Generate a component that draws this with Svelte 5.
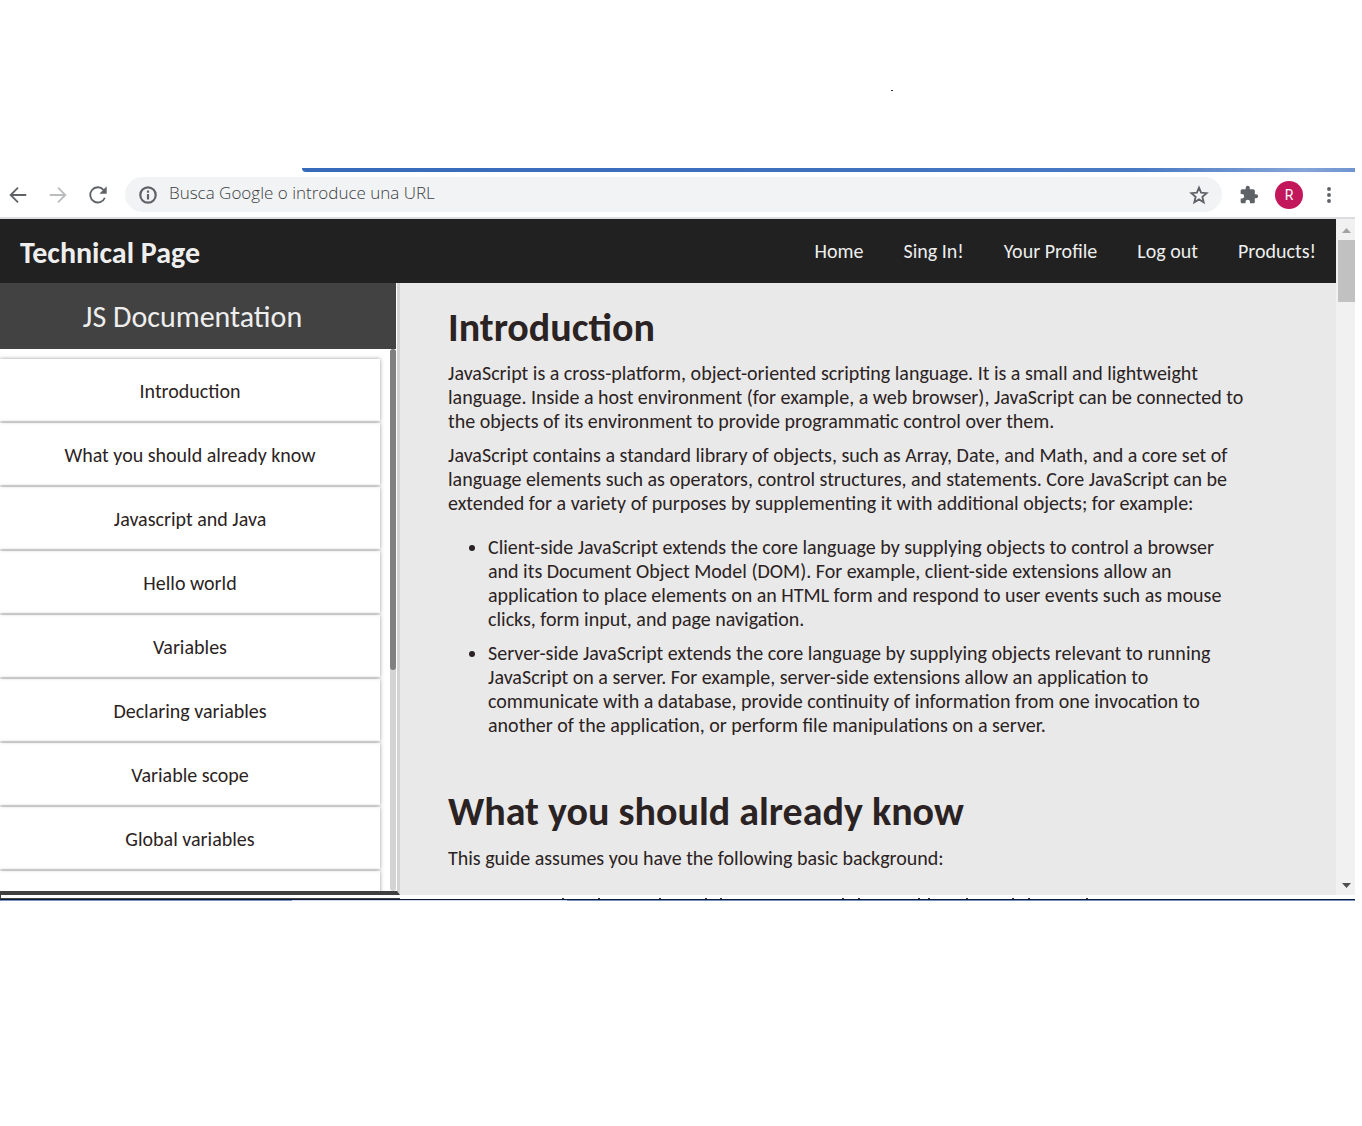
<script>
  const nav = ['Home', 'Sing In!', 'Your Profile', 'Log out', 'Products!'];
  const topics = [
    'Introduction',
    'What you should already know',
    'Javascript and Java',
    'Hello world',
    'Variables',
    'Declaring variables',
    'Variable scope',
    'Global variables'
  ];
  const intro = [
    'JavaScript is a cross-platform, object-oriented scripting language. It is a small and lightweight language. Inside a host environment (for example, a web browser), JavaScript can be connected to the objects of its environment to provide programmatic control over them.',
    'JavaScript contains a standard library of objects, such as Array, Date, and Math, and a core set of language elements such as operators, control structures, and statements. Core JavaScript can be extended for a variety of purposes by supplementing it with additional objects; for example:'
  ];
  const sides = [
    'Client-side JavaScript extends the core language by supplying objects to control a browser and its Document Object Model (DOM). For example, client-side extensions allow an application to place elements on an HTML form and respond to user events such as mouse clicks, form input, and page navigation.',
    'Server-side JavaScript extends the core language by supplying objects relevant to running JavaScript on a server. For example, server-side extensions allow an application to communicate with a database, provide continuity of information from one invocation to another of the application, or perform file manipulations on a server.'
  ];
  const ticks = [562, 598, 659, 705, 720, 842, 858, 918, 928, 966, 1012, 1028, 1086];
</script>

<div class="canvas">
  <div class="top"><span class="dot"></span></div>
  <div class="browser">
    <div class="tabstrip"></div>
    <div class="toolbar">
      <button aria-label="Back"><svg viewBox="0 0 24 24"><path d="M21 12H5M12 4L4 12L12 20" /></svg></button>
      <button class="off" aria-label="Forward"><svg viewBox="0 0 24 24"><path d="M3 12H19M12 4L20 12L12 20" /></svg></button>
      <button aria-label="Reload"><svg viewBox="0 0 24 24"><path d="M19.500 15A8.300 8.300 0 1 1 18 6.300" /><path class="solid" d="M21.500 2.500V10.500H13.500Z" /></svg></button>
      <div class="address">
        <svg class="info" viewBox="0 0 20 20"><circle cx="10" cy="10" r="7" /><path d="M10 9V14M10 6V8" /></svg>
        <input aria-label="URL" placeholder="Busca Google o introduce una URL" />
        <button class="star" aria-label="Bookmark"><svg viewBox="0 0 24 24"><path d="M12 4L14.300 9.500L20.300 10L15.700 14L17.100 19.900L12 16.800L6.900 19.900L8.300 14L3.700 10L9.700 9.500Z" /></svg></button>
      </div>
      <button class="ext" aria-label="Extensions"><svg viewBox="0 0 24 24"><path class="solid" d="M20.500 11H19V7c0-1.100-.9-2-2-2h-4V3.500a2.500 2.500 0 0 0-5 0V5H4c-1.100 0-2 .9-2 2v3.800h1.500a2.700 2.700 0 0 1 0 5.400H2V20c0 1.100.9 2 2 2h3.800v-1.500a2.700 2.700 0 0 1 5.400 0V22H17c1.100 0 2-.9 2-2v-4h1.500a2.500 2.500 0 0 0 0-5z" /></svg></button>
      <button class="avatar" aria-label="Account">R</button>
      <button class="more" aria-label="More"><svg viewBox="0 0 24 24"><circle class="solid" cx="12" cy="4" r="2.600" /><circle class="solid" cx="12" cy="12" r="2.600" /><circle class="solid" cx="12" cy="20" r="2.600" /></svg></button>
    </div>
    <div class="view">
      <div class="page">
        <header>
          <h1>Technical Page</h1>
          <nav>{#each nav as item}<a href="#top">{item}</a>{/each}</nav>
        </header>
        <div class="columns">
          <aside>
            <h2>JS Documentation</h2>
            <div class="scroller">
              <ul class="topics">
                {#each topics as topic}<li><a href="#topic">{topic}</a></li>{/each}
                <li></li>
              </ul>
              <div class="rail"><div class="grip"></div></div>
            </div>
          </aside>
          <main>
            <h2>Introduction</h2>
            {#each intro as text}<p>{text}</p>{/each}
            <ul>{#each sides as text}<li>{text}</li>{/each}</ul>
            <h2 class="next">What you should already know</h2>
            <p>This guide assumes you have the following basic background:</p>
          </main>
        </div>
      </div>
      <div class="scrollbar">
        <svg viewBox="0 0 17 21"><path fill="#a3a3a3" d="M4 14L8.500 9L13 14Z" /></svg>
        <div class="thumb"></div>
        <svg viewBox="0 0 17 21"><path fill="#505050" d="M4 9H13L8.500 14Z" /></svg>
      </div>
    </div>
    <svg class="edge" viewBox="0 0 1355 6" preserveAspectRatio="none">
      <path fill="#404040" d="M0 0H1V3H400V4H0Z" />
      {#each ticks as x}<rect {x} y="3" width="2" height="1" fill="#403038" />{/each}
      <rect y="4" width="1355" height="1" fill="#0d1a38" />
      <rect y="5" width="1355" height="1" fill="#7393c4" />
      <rect x="292" y="5" width="275" height="1" fill="#ccd8ec" />
    </svg>
  </div>
</div>

<style>
  :global(body) { margin: 0; background: #fff; }
  * { box-sizing: border-box; }
  .canvas { font-family: Carlito, Lato, sans-serif; color: #2b2323; padding-right: 7px; min-height: 100vh; }
  button { border: 0; padding: 0; background: none; display: grid; place-items: center; }
  svg { display: block; fill: none; stroke-width: 2; }
  button svg { width: 22px; height: 22px; stroke: #5f6368; }
  .solid { fill: #5f6368; stroke: none; }
  .top { height: 168px; padding: 90px 0 0 891px; }
  .dot { display: block; width: 2px; height: 1px; background: #333; }
  .tabstrip { height: 4px; margin-left: 302px; background: linear-gradient(90deg, #386abb, #3e70be 48%, #4b7ac4 80%, #85a5d8 95%, #6f94d0); border-bottom-left-radius: 4px; }
  .toolbar { height: 47px; display: flex; align-items: center; padding: 0 15px 0 7px; border-bottom: 2px solid #dadce0; }
  .toolbar > button { width: 22px; height: 22px; margin-right: 18px; }
  .toolbar > .off svg { stroke: #babcbe; }
  .address { flex: 1; height: 35px; margin: 0 17px 0 -2px; border-radius: 18px; background: #f1f3f4; display: flex; align-items: center; padding: 0 12px; }
  .info { width: 22px; height: 22px; stroke: #5f6368; }
  input { flex: 1; min-width: 0; border: 0; outline: 0; background: none; padding: 0 0 4px; margin-left: 10px; font: 300 17px "Open Sans", sans-serif; }
  input::placeholder { color: #3c4043; opacity: 1; }
  .toolbar > .ext { width: 20px; margin-right: 16px; }
  .ext svg { width: 20px; height: 20px; }
  .toolbar > .avatar { width: 28px; height: 28px; border-radius: 50%; background: #c2185b; color: #fff; font: 14px Roboto, sans-serif; margin-right: 15px; }
  .toolbar > .more { margin: 0; }
  .more svg { width: 18px; height: 18px; }
  .view { display: flex; height: 676px; }
  .page { flex: 1; min-width: 0; display: flex; flex-direction: column; }
  header { height: 64px; flex: none; background: #212121; color: #eee; display: flex; align-items: center; justify-content: space-between; padding: 0 20px; }
  h1 { margin: 0; font-size: 30px; line-height: 32px; padding-top: 4px; }
  nav { display: flex; gap: 40px; }
  nav a { color: #eee; text-decoration: none; font-size: 20px; line-height: 24px; }
  .columns { flex: 1; min-height: 0; display: flex; background: #e9e9e9; }
  aside { width: 400px; flex: none; background: #fff; border-right: 3px solid #d3d3d3; border-bottom: 4px solid #404040; padding-right: 1px; display: flex; flex-direction: column; }
  aside h2 { margin: 0; height: 66px; flex: none; background: #424242; color: #eee; font-size: 30px; font-weight: 400; line-height: 68px; text-align: center; padding-right: 11px; }
  .scroller { flex: 1; min-height: 0; display: flex; justify-content: space-between; overflow: hidden; }
  .topics { list-style: none; margin: 0; padding: 10px 0 0; width: 380px; display: flex; flex-direction: column; gap: 2px; }
  .topics li { height: 62px; flex: none; box-shadow: 0 0 4px #999; }
  .topics a { display: block; color: #2b2323; text-decoration: none; text-align: center; font-size: 20px; line-height: 64px; }
  .rail { width: 6px; background: #d3d3d3; border-radius: 3px; }
  .grip { height: 321px; background: #808080; border-radius: 3px; }
  main { flex: 1; min-width: 0; padding: 22px 88px 0 48px; overflow: hidden; }
  main h2 { margin: 0 0 10px; font-size: 40px; line-height: 46px; }
  main .next { margin: 52px 0 11px; }
  p { margin: 0 0 10px; }
  p, main li { font-size: 20px; line-height: 24px; }
  main ul { margin: 20px 0 0; padding-left: 40px; }
  main li + li { margin-top: 10px; }
  .scrollbar { width: 19px; background: #f1f1f1; padding-left: 2px; display: flex; flex-direction: column; }
  .scrollbar svg { width: 17px; height: 21px; }
  .thumb { height: 62px; background: #c1c1c1; margin-bottom: auto; }
  .edge { width: 100%; height: 6px; }
</style>
